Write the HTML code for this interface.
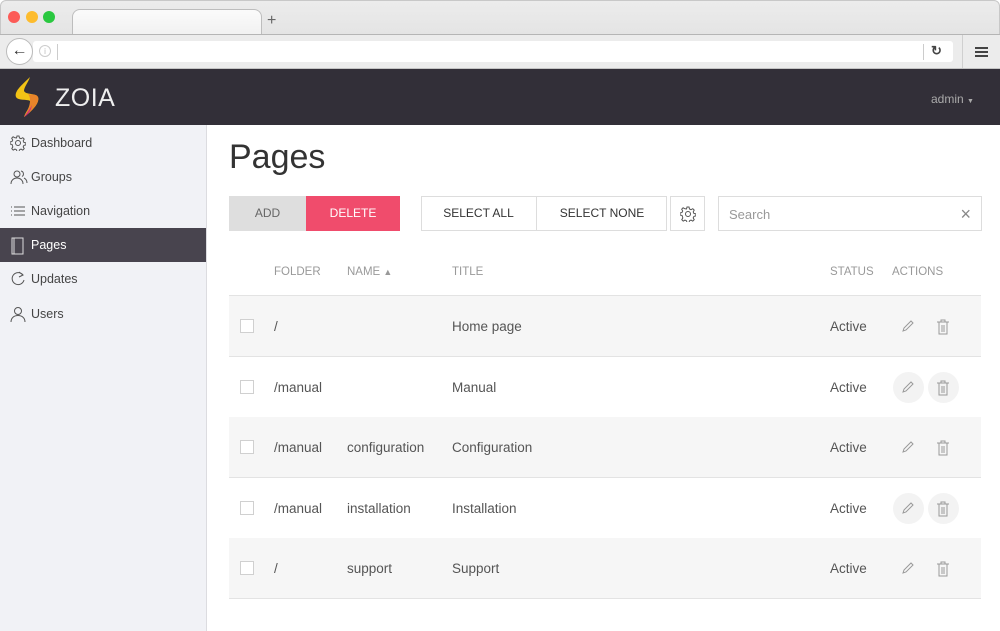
<!DOCTYPE html>
<html><head><meta charset="utf-8"><style>
*{box-sizing:border-box;margin:0;padding:0}
body{width:1000px;height:631px;overflow:hidden;font-family:"Liberation Sans",sans-serif;background:#fff;position:relative}
.abs{position:absolute}
.chrome{left:0;top:0;width:1000px;height:69px;background:linear-gradient(#ececec,#dcdcdc);border:1px solid #c8c8c8;border-radius:6px 6px 0 0}
.dot{width:12px;height:12px;border-radius:50%;top:11px}
.tab{left:72px;top:9px;width:190px;height:26px;background:linear-gradient(#fbfbfb,#f1f1f1);border:1px solid #bdbdbd;border-bottom:none;border-radius:8px 8px 0 0}
.bar{left:0;top:34px;width:1000px;height:35px;background:#ececec;border-top:1px solid #b5b5b5;border-bottom:1px solid #c4c4c4}
.url{left:33px;top:41px;width:920px;height:21px;background:#fff;border-radius:3px}
.hdr{left:0;top:69px;width:1000px;height:56px;background:#322f38}
.side{left:0;top:125px;width:207px;height:506px;background:#f1f2f6;border-right:1px solid #dcdce0}
.nav{left:0;width:206px;height:34px;font-size:12.5px;color:#444;line-height:34px;padding-left:31px}
.nav svg{position:absolute;left:10px;top:9px}
.btn{top:196px;height:35px;font-size:12px;line-height:35px;text-align:center;color:#333}
.th{top:266px;font-size:11.5px;color:#999}
.row{left:229px;width:752px;height:61px;border-bottom:1px solid #e3e3e3;font-size:13.5px;color:#555}
.row span{position:absolute;top:23px}
.cb{left:11px;top:23px;width:14px;height:14px;border:1px solid #d0d0d0;background:#fff;position:absolute}
.ic{position:absolute;top:15px;width:31px;height:31px;border-radius:50%}
.ic svg{position:absolute;left:8px;top:8px}
</style></head><body>
<div class="abs chrome"></div>
<div class="abs dot" style="left:8px;background:#fc5b57"></div>
<div class="abs dot" style="left:26px;background:#fdbc2e"></div>
<div class="abs dot" style="left:43px;background:#2ac840"></div>
<div class="abs tab"></div>
<div class="abs" style="left:267px;top:12px;font-size:16px;color:#666">+</div>
<div class="abs bar"></div>
<div class="abs url"></div>
<div class="abs" style="left:6px;top:38px;width:27px;height:27px;border-radius:50%;background:#fff;border:1px solid #bbb;text-align:center;line-height:24px;font-size:16px;font-weight:bold;color:#333">&#8592;</div>
<div class="abs" style="left:39px;top:45px;width:12px;height:12px;border:1px solid #ccc;border-radius:50%;font-size:8px;color:#bbb;text-align:center;line-height:11px">i</div>
<div class="abs" style="left:57px;top:44px;width:1px;height:16px;background:#ccc"></div>
<div class="abs" style="left:923px;top:44px;width:1px;height:16px;background:#ccc"></div>
<div class="abs" style="left:931px;top:43px;font-size:13px;color:#444;font-weight:bold">&#8635;</div>
<div class="abs" style="left:962px;top:35px;width:1px;height:33px;background:#d0d0d0"></div>
<div class="abs" style="left:975px;top:47px;width:13px;height:2px;background:#444;box-shadow:0 4px 0 #444,0 8px 0 #444"></div>
<div class="abs hdr"></div>
<svg class="abs" style="left:12px;top:75px" width="32" height="44" viewBox="0 0 32 44"><path d="M18 2 C10 10,2 16,4 22 C6 26,16 24,18 26 C20 30,14 36,12 42 C20 36,28 28,26 22 C24 18,14 20,12 16 C12 12,16 8,18 2Z" fill="#f2c315"/><path d="M26 22 C24 18,18 20,16 19 C20 24,18 32,12 42 C20 36,28 28,26 22Z" fill="#e8842a"/><path d="M20 30 C18 34,15 38,12 42 C16 40,19 36,20 30Z" fill="#d0307a"/></svg>
<div class="abs" style="left:55px;top:84px;font-size:25px;color:#eee;letter-spacing:0.5px">ZOIA</div>
<div class="abs" style="left:931px;top:92px;font-size:12px;color:#aaa">admin <span style="font-size:7px">&#9660;</span></div>
<div class="abs side"></div>
<div class="abs nav" style="top:126px"><svg width="16" height="16" viewBox="0 0 16 16" fill="none" stroke="#555"><circle cx="8" cy="8" r="2.5"/><path d="M7 1h2l.5 2 1.5.7 1.8-1 1.4 1.4-1 1.8.7 1.5 2 .5v2l-2 .5-.7 1.5 1 1.8-1.4 1.4-1.8-1-1.5.7-.5 2H7l-.5-2-1.5-.7-1.8 1-1.4-1.4 1-1.8L2.1 9.5 0 9V7l2-.5.7-1.5-1-1.8 1.4-1.4 1.8 1L6.5 3z"/></svg>Dashboard</div>
<div class="abs nav" style="top:160px"><svg width="18" height="16" viewBox="0 0 18 16" fill="none" stroke="#555"><circle cx="7" cy="5" r="3"/><path d="M1 15c0-4 3-6 6-6s6 2 6 6"/><path d="M11 2a3 3 0 0 1 1 5.5M14 9c2 1 3 3 3 5"/></svg>Groups</div>
<div class="abs nav" style="top:194px"><svg width="16" height="16" viewBox="0 0 16 16" stroke="#555"><path d="M1 4h1M1 8h1M1 12h1M4 4h11M4 8h11M4 12h11"/></svg>Navigation</div>
<div class="abs nav" style="top:228px;background:#48444e;color:#fff"><svg width="16" height="18" viewBox="0 0 16 18" fill="none" stroke="#ddd"><rect x="2" y="1" width="11" height="16"/><path d="M4 1v16"/></svg>Pages</div>
<div class="abs nav" style="top:262px"><svg width="16" height="16" viewBox="0 0 16 16" fill="none" stroke="#555"><path d="M13 4A6 6 0 1 0 14 9"/><path d="M9 1l4 3-4 2"/></svg>Updates</div>
<div class="abs nav" style="top:297px"><svg width="16" height="16" viewBox="0 0 16 16" fill="none" stroke="#555"><circle cx="8" cy="5" r="3.5"/><path d="M1 16c0-4 3-6.5 7-6.5s7 2.5 7 6.5"/></svg>Users</div>
<div class="abs" style="left:229px;top:138px;font-size:34px;color:#333">Pages</div>
<div class="abs btn" style="left:229px;width:77px;background:#dedede;color:#666">ADD</div>
<div class="abs btn" style="left:306px;width:94px;background:#f04c6c;color:#fff">DELETE</div>
<div class="abs btn" style="left:421px;width:246px;border:1px solid #ddd"></div>
<div class="abs btn" style="left:421px;width:116px;border-right:1px solid #ddd">SELECT ALL</div>
<div class="abs btn" style="left:537px;width:130px">SELECT NONE</div>
<div class="abs btn" style="left:670px;width:35px;border:1px solid #ddd"><svg style="margin-top:9px" width="16" height="16" viewBox="0 0 16 16" fill="none" stroke="#555"><circle cx="8" cy="8" r="2.5"/><path d="M7 1h2l.5 2 1.5.7 1.8-1 1.4 1.4-1 1.8.7 1.5 2 .5v2l-2 .5-.7 1.5 1 1.8-1.4 1.4-1.8-1-1.5.7-.5 2H7l-.5-2-1.5-.7-1.8 1-1.4-1.4 1-1.8L2.1 9.5 0 9V7l2-.5.7-1.5-1-1.8 1.4-1.4 1.8 1L6.5 3z"/></svg></div>
<div class="abs btn" style="left:718px;width:264px;border:1px solid #ddd;text-align:left;padding-left:10px;color:#999;font-size:13px">Search<span style="position:absolute;right:10px;top:0;font-size:18px;color:#888">&#215;</span></div>
<div class="abs th" style="left:274px">FOLDER</div>
<div class="abs th" style="left:347px">NAME <span style="font-size:9px">&#9650;</span></div>
<div class="abs th" style="left:452px">TITLE</div>
<div class="abs th" style="left:830px">STATUS</div>
<div class="abs th" style="left:892px">ACTIONS</div>
<div class="abs" style="left:229px;top:295px;width:752px;height:1px;background:#e3e3e3"></div>
<div class="abs row" style="top:296px;background:#f6f6f6"><div class="cb"></div><span style="left:45px">/</span><span style="left:223px">Home page</span><span style="left:601px">Active</span><div class="ic" style="left:664px"><svg width="14" height="14" viewBox="0 0 14 14" fill="none" stroke="#999"><path d="M2 12l1-3 7-7 2 2-7 7z"/></svg></div><div class="ic" style="left:699px"><svg width="14" height="16" viewBox="0 0 14 16" fill="none" stroke="#999"><path d="M1 3h12M5 3V1h4v2M3 3v12h8V3M6 6v7M8 6v7"/></svg></div></div>
<div class="abs row" style="top:357px"><div class="cb"></div><span style="left:45px">/manual</span><span style="left:223px">Manual</span><span style="left:601px">Active</span><div class="ic" style="left:664px;background:#f3f3f3"><svg width="14" height="14" viewBox="0 0 14 14" fill="none" stroke="#999"><path d="M2 12l1-3 7-7 2 2-7 7z"/></svg></div><div class="ic" style="left:699px;background:#f3f3f3"><svg width="14" height="16" viewBox="0 0 14 16" fill="none" stroke="#999"><path d="M1 3h12M5 3V1h4v2M3 3v12h8V3M6 6v7M8 6v7"/></svg></div></div>
<div class="abs row" style="top:417px;background:#f6f6f6"><div class="cb"></div><span style="left:45px">/manual</span><span style="left:118px">configuration</span><span style="left:223px">Configuration</span><span style="left:601px">Active</span><div class="ic" style="left:664px"><svg width="14" height="14" viewBox="0 0 14 14" fill="none" stroke="#999"><path d="M2 12l1-3 7-7 2 2-7 7z"/></svg></div><div class="ic" style="left:699px"><svg width="14" height="16" viewBox="0 0 14 16" fill="none" stroke="#999"><path d="M1 3h12M5 3V1h4v2M3 3v12h8V3M6 6v7M8 6v7"/></svg></div></div>
<div class="abs row" style="top:478px"><div class="cb"></div><span style="left:45px">/manual</span><span style="left:118px">installation</span><span style="left:223px">Installation</span><span style="left:601px">Active</span><div class="ic" style="left:664px;background:#f3f3f3"><svg width="14" height="14" viewBox="0 0 14 14" fill="none" stroke="#999"><path d="M2 12l1-3 7-7 2 2-7 7z"/></svg></div><div class="ic" style="left:699px;background:#f3f3f3"><svg width="14" height="16" viewBox="0 0 14 16" fill="none" stroke="#999"><path d="M1 3h12M5 3V1h4v2M3 3v12h8V3M6 6v7M8 6v7"/></svg></div></div>
<div class="abs row" style="top:538px;background:#f6f6f6"><div class="cb"></div><span style="left:45px">/</span><span style="left:118px">support</span><span style="left:223px">Support</span><span style="left:601px">Active</span><div class="ic" style="left:664px"><svg width="14" height="14" viewBox="0 0 14 14" fill="none" stroke="#999"><path d="M2 12l1-3 7-7 2 2-7 7z"/></svg></div><div class="ic" style="left:699px"><svg width="14" height="16" viewBox="0 0 14 16" fill="none" stroke="#999"><path d="M1 3h12M5 3V1h4v2M3 3v12h8V3M6 6v7M8 6v7"/></svg></div></div>
</body></html>
